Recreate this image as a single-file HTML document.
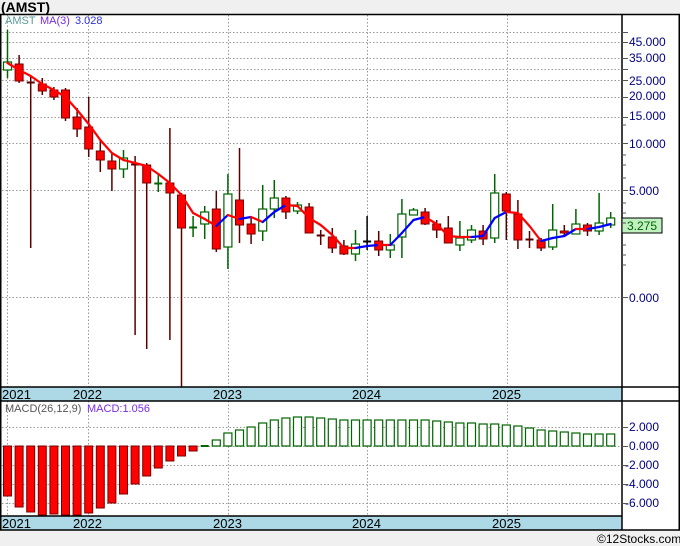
<!DOCTYPE html>
<html><head><meta charset="utf-8"><style>
body{margin:0;width:680px;height:546px;background:#f0f0f0;overflow:hidden;font-family:"Liberation Sans",sans-serif}
svg{position:absolute;left:0;top:0}
</style></head><body>
<svg id="s" width="680" height="546" xmlns="http://www.w3.org/2000/svg" font-family="Liberation Sans, DejaVu Sans, sans-serif">
<rect x="0" y="14" width="680" height="516" fill="#fff"/>
<text x="1" y="12" font-size="14" font-weight="bold" fill="#000">(AMST)</text>
<g id="grid" stroke="#999" stroke-dasharray="1.5,2" stroke-width="1"></g>
<g id="c"></g>
<rect x="0" y="387" width="622" height="14" fill="#add8e6"/>
<rect x="0" y="516" width="622" height="14" fill="#add8e6"/>
<g stroke="#000" stroke-width="1.5" fill="none">
<line x1="0" y1="14.5" x2="680" y2="14.5"/>
<line x1="0.75" y1="14" x2="0.75" y2="530"/>
<line x1="622" y1="14" x2="622" y2="530"/>
<line x1="679.25" y1="14" x2="679.25" y2="530"/>
<line x1="0" y1="387" x2="680" y2="387"/>
<line x1="0" y1="401" x2="680" y2="401"/>
<line x1="0" y1="516" x2="622" y2="516"/>
<line x1="0" y1="530" x2="680" y2="530"/>
</g>
<g font-size="13" fill="#000">
<text x="2" y="399">2021</text><text x="73" y="399">2022</text><text x="213" y="399">2023</text><text x="352" y="399">2024</text><text x="492" y="399">2025</text>
<text x="2" y="528">2021</text><text x="73" y="528">2022</text><text x="213" y="528">2023</text><text x="352" y="528">2024</text><text x="492" y="528">2025</text>
</g>
<g font-size="12" fill="#000080">
<text x="629" y="46">45.000</text><text x="629" y="62">35.000</text><text x="629" y="85">25.000</text><text x="629" y="100">20.000</text><text x="629" y="120">15.000</text><text x="629" y="148">10.000</text><text x="629" y="195">5.000</text><text x="629" y="302">0.000</text>
<text x="629" y="431">2.000</text><text x="629" y="450">0.000</text><text x="625" y="469">-2.000</text><text x="625" y="488">-4.000</text><text x="625" y="507">-6.000</text>
</g>
<rect x="622" y="218" width="40" height="15" fill="#c0f0c0" stroke="#000"/>
<text x="627" y="230" font-size="12" fill="#006400">3.275</text>
<text x="5" y="24" font-size="11" fill="#5a9a9a">AMST</text>
<text x="40" y="24" font-size="11" fill="#7a2be2">MA(3)</text>
<text x="75" y="24" font-size="11" fill="#3030e0">3.028</text>
<text x="5" y="412" font-size="11" fill="#555">MACD(26,12,9)</text>
<text x="87" y="412" font-size="11" fill="#7a2be2">MACD:1.056</text>
<text x="597" y="543" font-size="12" fill="#000">©12Stocks.com</text>
</svg>
<script>
var ns="http://www.w3.org/2000/svg",g=document.getElementById('grid'),c=document.getElementById('c'),ax=document.getElementById('s');
function el(t,a,p){var e=document.createElementNS(ns,t);for(var k in a)e.setAttribute(k,a[k]);(p||c).appendChild(e);return e;}
[32,42,58,69,80,97,117,143,190,297,427,446,465,484,503].forEach(function(y){el('line',{x1:2,x2:622,y1:y+.5,y2:y+.5},g);el('line',{x1:622,x2:628,y1:y+.5,y2:y+.5,stroke:'#555'},ax);});
[125,155,165,178,203,213,223,245,255,265].forEach(function(y){el('line',{x1:622,x2:626,y1:y,y2:y,stroke:'#555'},ax);});
[7,88,228,367,507].forEach(function(x){el('line',{x1:x+.5,x2:x+.5,y1:15,y2:387},g);el('line',{x1:x+.5,x2:x+.5,y1:401,y2:516},g);});
var D=[['g',62,70,30,78],['r',64,81,55,83],['rd',82,82,75,248],['r',84,91,78,95],['r',90,97,87,100],['r',90,118,88,121],['r',117,129,108,137],['r',127,149,97,157],['r',151,160,140,172],['r',161,169,153,191],['g',158,169,150,178],['rd',164,164,156,335],['r',165,183,163,349],['gd',183,183,175,192],['r',183,193,128,340],['r',195,228,193,387],['gd',227,227,216,237],['g',212,224,206,239],['r',209,249,191,252],['g',194,247,174,269],['r',200,225,148,243],['r',224,234,217,244],['g',209,231,185,241],['g',198,209,180,218],['r',198,212,196,219],['g',205,211,202,214],['r',207,233,203,233],['rd',235,235,230,245],['r',237,248,228,253],['r',246,254,240,255],['g',244,254,230,261],['kd',241,241,216,250],['r',241,250,231,256],['g',245,250,234,258],['g',214,237,199,258],['g',210,215,208,215],['r',212,224,208,225],['r',224,230,220,238],['r',228,243,216,243],['g',238,245,221,251],['g',230,240,225,243],['r',231,239,225,245],['g',193,238,174,243],['r',194,211,192,240],['r',214,240,200,249],['rd',239,239,231,248],['r',240,248,238,251],['g',230,247,204,250],['r',231,233,225,235],['g',224,234,209,234],['r',225,231,223,236],['g',223,231,193,235],['g',218,225,212,228]];
var MA=[63,70,76,84,90,97,110,124,140,153,160,163,166,174,183,195,213,219,226,215,219,217,222,212,205,206,218,225,235,248,248,246,245,245,233,220,217,224,236,237,237,236,218,212,213,226,241,238,236,229,229,227,224];
var MC=[496,507,512,515,514,515,515,513,508,503,494,484,476,468,461,456,451,447,440,433,430,427,423,420,418,417,417,418,419,420,420,420,420,420,420,420,420,421,422,423,423,424,424,425,426,428,430,431,432,433,434,434,434];
function X(i){return 7.5+11.6*i;}
D.forEach(function(d,i){var x=X(i),t=d[0];
 var wc=t[0]=='r'?'#5a0000':(t[0]=='k'?'#000':'#006400');
 el('line',{x1:x,x2:x,y1:d[3],y2:d[4],stroke:wc,'stroke-width':1.5});
 if(t.length==2){el('line',{x1:x-4,x2:x+4,y1:d[1]+.5,y2:d[1]+.5,stroke:wc,'stroke-width':2});}
 else if(t=='r'){el('rect',{x:x-4,y:d[1],width:8,height:d[2]-d[1],fill:'#f00',stroke:'#7a0000','stroke-width':1});}
 else{el('rect',{x:x-4,y:d[1],width:8,height:d[2]-d[1],fill:'#fff',stroke:'#006400','stroke-width':1.2});}
});
for(var i=0;i<MA.length-1;i++){el('line',{x1:X(i),y1:MA[i],x2:X(i+1),y2:MA[i+1],stroke:MA[i+1]<MA[i]?'#0000ff':'#ff0000','stroke-width':2.2,'stroke-linecap':'round'});}
MC.forEach(function(v,i){var x=X(i);
 if(v>447){el('rect',{x:x-4,y:446,width:8,height:v-446,fill:'#f00',stroke:'#7a0000'});}
 else if(v>=445){el('line',{x1:x-4,x2:x+4,y1:446,y2:446,stroke:'#006400','stroke-width':2});}
 else{el('rect',{x:x-4,y:v,width:8,height:446-v,fill:'#fff',stroke:'#006400','stroke-width':1.2});}
});
</script>
</body></html>
